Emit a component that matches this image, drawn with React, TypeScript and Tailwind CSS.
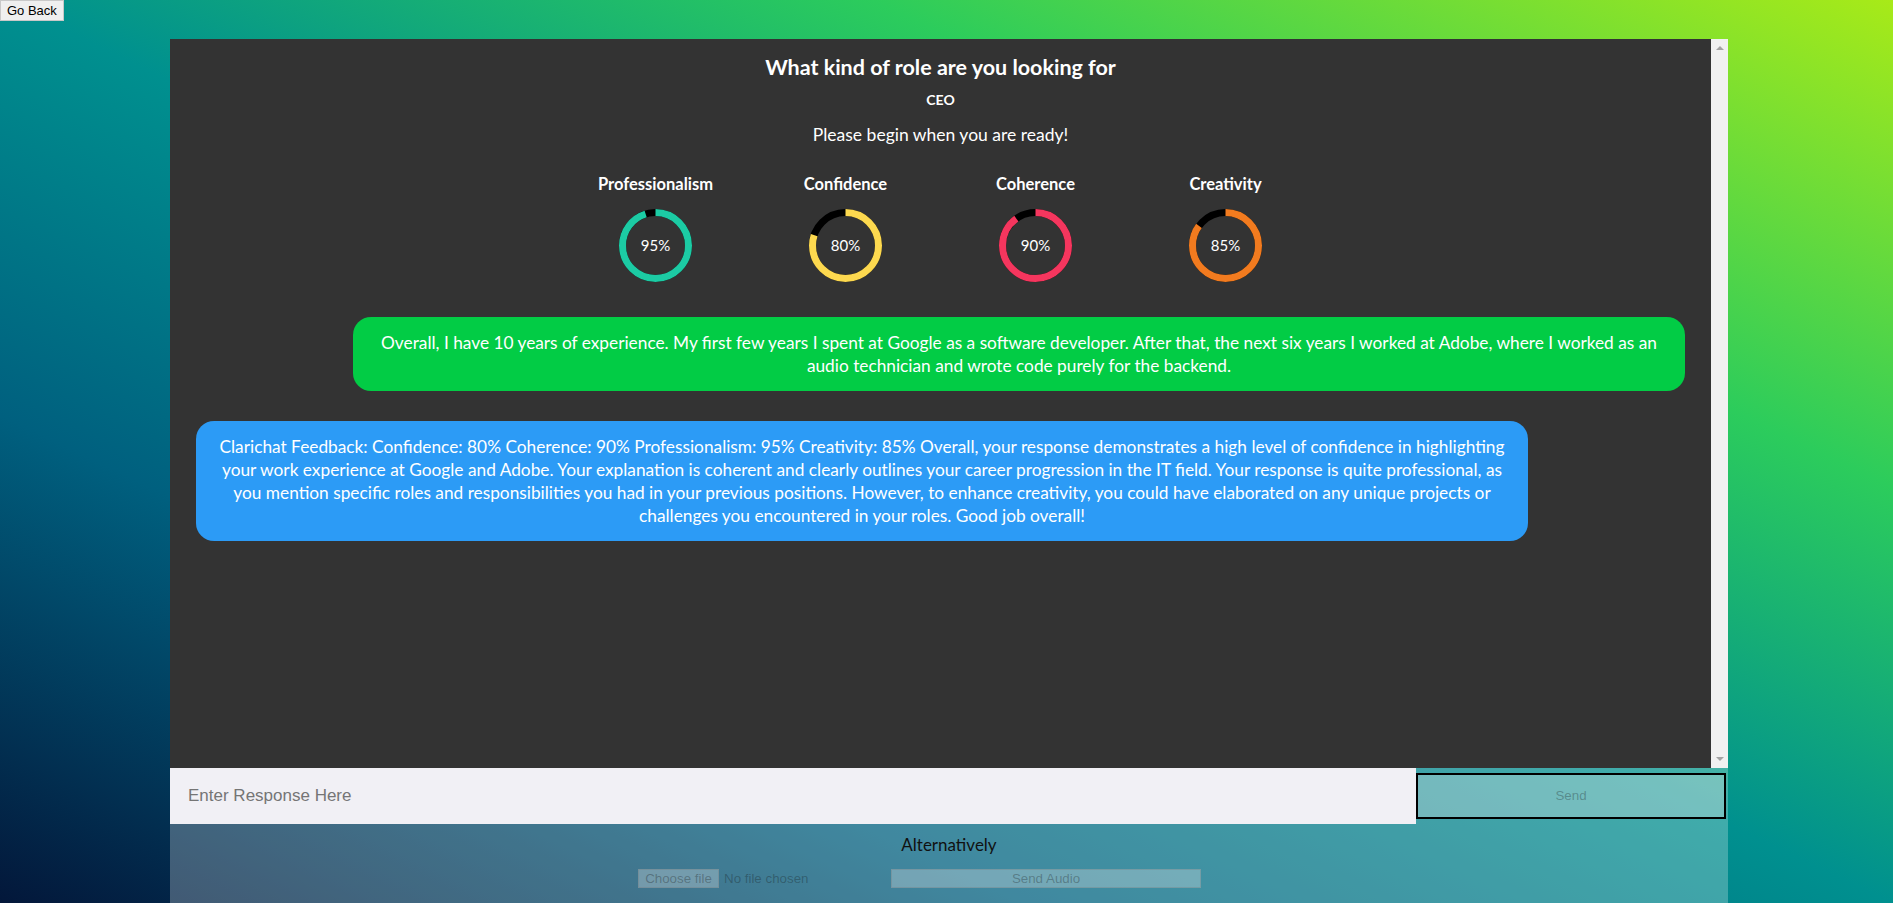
import React from "react";

const rings = [
  { label: "Professionalism", pct: 95, color: "#1ccba4" },
  { label: "Confidence", pct: 80, color: "#fdd94f" },
  { label: "Coherence", pct: 90, color: "#f5365e" },
  { label: "Creativity", pct: 85, color: "#f27b1f" },
];

function Ring({ pct, color }: { pct: number; color: string }) {
  const r = 33;
  const c = 2 * Math.PI * r;
  return (
    <div className="relative h-[73px] w-[73px]">
      <svg width="73" height="73" viewBox="0 0 73 73" className="block">
        <circle cx="36.5" cy="36.5" r={r} fill="none" stroke="#000" strokeWidth="7" />
        <circle
          cx="36.5"
          cy="36.5"
          r={r}
          fill="none"
          stroke={color}
          strokeWidth="7"
          strokeDasharray={`${(c * pct) / 100} ${c}`}
          transform="rotate(-90 36.5 36.5)"
        />
      </svg>
      <div className="absolute inset-0 flex items-center justify-center text-[15px] leading-none text-white">
        {pct}%
      </div>
    </div>
  );
}

export default function App() {
  return (
    <div className="h-screen w-full overflow-hidden bg-[linear-gradient(to_top_right,#03173a_0%,#00607f_27%,#00908f_50%,#2ccc5c_73%,#a8ea18_100%)] font-['Lato',sans-serif]">
      <button className="block h-[21px] border border-[#c8c8c8] bg-[#efefef] px-[6px] font-['Liberation_Sans',Arial,sans-serif] text-[13px] leading-none text-black">
        Go Back
      </button>
      <div className="ml-[170px] mt-[18px] flex w-[1558px] flex-col bg-white/25">
        <div className="flex h-[729px]">
          <div className="flex flex-1 flex-col items-center bg-[#333333] pt-[16px] text-white">
            <h2 className="text-[21.5px] font-bold leading-[25px]">What kind of role are you looking for</h2>
            <p className="mt-[11px] text-[14px] font-bold leading-[17px]">CEO</p>
            <p className="mt-[16px] text-[17.5px] leading-[22px]">Please begin when you are ready!</p>
            <div className="mt-[28px] flex">
              {rings.map((r) => (
                <div key={r.label} className="flex w-[190px] flex-col items-center">
                  <div className="text-[16.5px] font-bold leading-[20px]">{r.label}</div>
                  <div className="mt-[15px]">
                    <Ring pct={r.pct} color={r.color} />
                  </div>
                </div>
              ))}
            </div>
            <div className="mt-[35px] flex w-full flex-col px-[26px]">
              <div className="w-[1332px] self-end rounded-[18px] bg-[#02cc45] px-[18px] py-[14px] text-center text-[17.3px] leading-[23px] text-white">
                Overall, I have 10 years of experience. My first few years I spent at Google as a software developer. After that, the next six years I worked at Adobe, where I worked as an audio technician and wrote code purely for the backend.
              </div>
              <div className="mt-[30px] w-[1332px] self-start rounded-[18px] bg-[#2c9bf6] px-[18px] py-[14px] text-center text-[17.3px] leading-[23px] text-white">
                Clarichat Feedback: Confidence: 80% Coherence: 90% Professionalism: 95% Creativity: 85% Overall, your response demonstrates a high level of confidence in highlighting your work experience at Google and Adobe. Your explanation is coherent and clearly outlines your career progression in the IT field. Your response is quite professional, as you mention specific roles and responsibilities you had in your previous positions. However, to enhance creativity, you could have elaborated on any unique projects or challenges you encountered in your roles. Good job overall!
              </div>
            </div>
          </div>
          <div className="flex w-[17px] flex-col items-center justify-between bg-[#f1f1f1] py-[7px]">
            <div className="h-0 w-0 border-x-[4px] border-b-[4px] border-x-transparent border-b-[#a3a3a3]" />
            <div className="h-0 w-0 border-x-[4px] border-t-[4px] border-x-transparent border-t-[#a3a3a3]" />
          </div>
        </div>
        <div className="flex h-[56px] items-center">
          <input
            placeholder="Enter Response Here"
            className="h-full w-[1246px] bg-[#f1f0f5] pl-[18px] font-['Liberation_Sans',Arial,sans-serif] text-[17px] text-black outline-none placeholder:text-[#757575]"
          />
          <button
            disabled
            className="h-[46px] w-[310px] border-2 border-black bg-[rgba(239,239,239,0.3)] font-['Liberation_Sans',Arial,sans-serif] text-[13.33px] text-[rgba(16,16,16,0.3)]"
          >
            Send
          </button>
        </div>
        <div className="flex h-[79px] flex-col">
          <p className="mt-[11px] text-center text-[17px] leading-[20px] text-[#111111]">Alternatively</p>
          <div className="mt-[14px] flex items-center pl-[468px] font-['Liberation_Sans',Arial,sans-serif] text-[13.33px]">
            <div className="flex w-[253px] items-center">
              <span className="flex h-[19px] w-[81px] items-center justify-center border border-[rgba(118,118,118,0.3)] bg-[rgba(239,239,239,0.3)] text-[rgba(16,16,16,0.3)]">
                Choose file
              </span>
              <span className="ml-[5px] text-[rgba(16,16,16,0.3)]">No file chosen</span>
            </div>
            <button
              disabled
              className="flex h-[19px] w-[310px] items-center justify-center border border-[rgba(118,118,118,0.3)] bg-[rgba(239,239,239,0.3)] text-[rgba(16,16,16,0.3)]"
            >
              Send Audio
            </button>
          </div>
        </div>
      </div>
    </div>
  );
}
